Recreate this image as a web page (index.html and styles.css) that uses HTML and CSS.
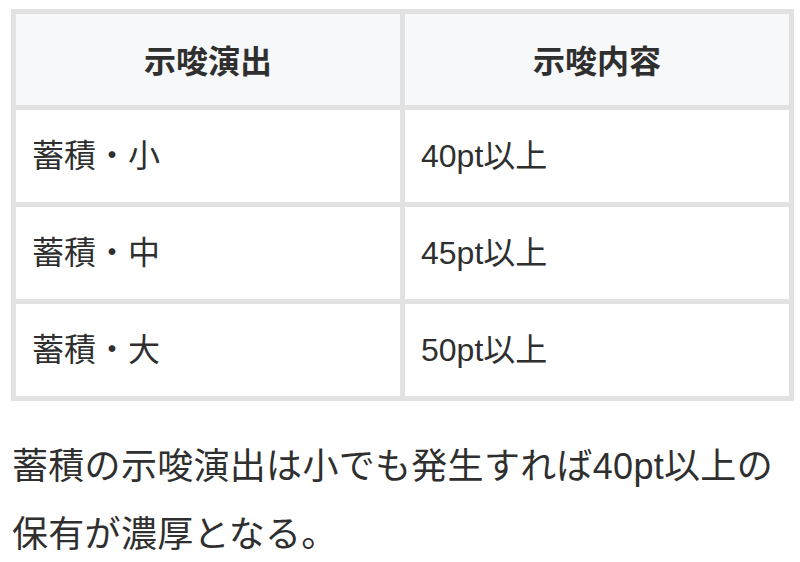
FILE: index.html
```html
<!DOCTYPE html>
<html lang="ja">
<head>
<meta charset="utf-8">
<link rel="stylesheet" href="styles.css">
</head>
<body>
<div class="page">
  <table class="hint-table">
    <thead>
      <tr><th>示唆演出</th><th>示唆内容</th></tr>
    </thead>
    <tbody>
      <tr><td>蓄積・小</td><td>40pt以上</td></tr>
      <tr><td>蓄積・中</td><td>45pt以上</td></tr>
      <tr><td>蓄積・大</td><td>50pt以上</td></tr>
    </tbody>
  </table>
  <p class="note">蓄積の示唆演出は小でも発生すれば40pt以上の保有が濃厚となる。</p>
</div>
</body>
</html>
```

FILE: styles.css
```css
html, body {
  margin: 0;
  padding: 0;
  background: #ffffff;
}
body {
  font-family: "Liberation Sans", "Noto Sans CJK JP", sans-serif;
  color: #2f2f2f;
}
.page {
  padding: 9px 6px 0 11px;
}
.hint-table {
  width: 783px;
  border-collapse: collapse;
  table-layout: fixed;
  border: 5px solid #e2e2e2;
}
.hint-table th,
.hint-table td {
  border: 5px solid #e2e2e2;
  font-size: 32px;
  padding: 22px 16px;
}
.hint-table th {
  background: #f7f8fa;
  font-family: "Noto Sans CJK JP", sans-serif;
  font-weight: bold;
  text-align: center;
  line-height: 47px;
}
.hint-table td {
  text-align: left;
  line-height: 48px;
  font-weight: normal;
}
.note {
  margin: 32px 0 0 1px;
  font-size: 36px;
  line-height: 68px;
  letter-spacing: 0.3px;
}
```
